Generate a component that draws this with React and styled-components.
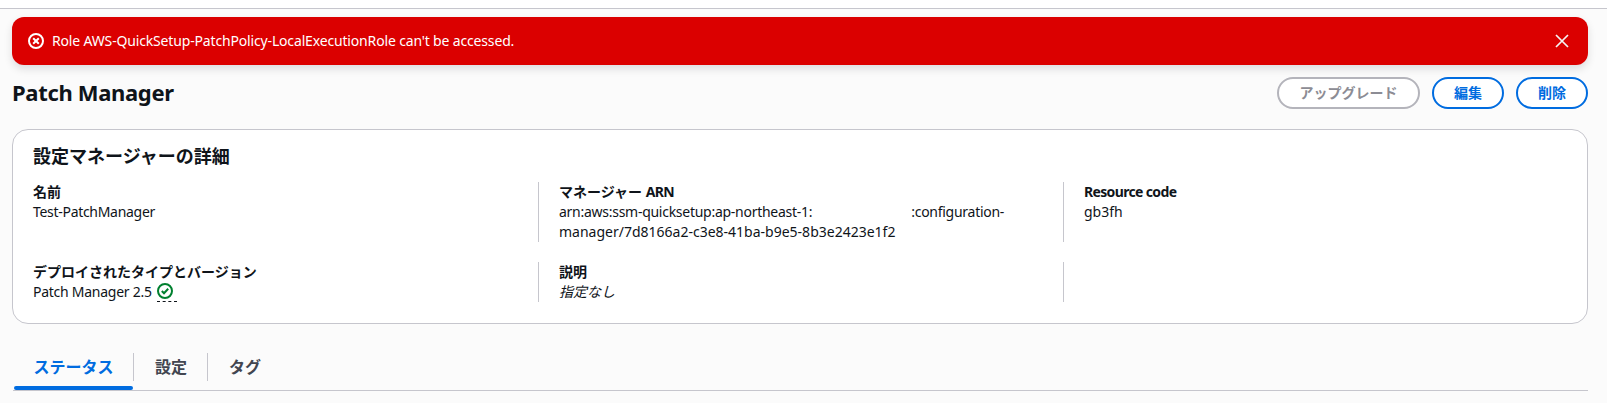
import React from "react";
import styled, { createGlobalStyle } from "styled-components";

const Global = createGlobalStyle`
  html, body { margin: 0; padding: 0; background: #fbfbfb; }
  body { font-family: "Noto Sans", "Noto Sans CJK JP", sans-serif; font-size: 14px; line-height: 20px; color: #0f141a; }
`;
const Page = styled.div`
  width: 1607px; height: 403px; overflow: hidden; display: flex; flex-direction: column;
`;
const TopBar = styled.div`
  height: 8px; background: #fff; border-bottom: 1px solid #c6c6cd; flex: none;
`;
const Content = styled.div`
  display: flex; flex-direction: column; padding: 8px 19px 0 12px;
`;
const Flash = styled.div`
  height: 48px; border-radius: 12px; background: #db0000; color: #fff; display: flex; align-items: center;
  padding: 0 12px 0 16px; box-shadow: 0 4px 8px rgba(0,7,22,.12);
`;
const FlashText = styled.span`
  margin-left: 8px; flex: 1; letter-spacing: -0.16px;
`;
const CloseButton = styled.button`
  border: 0; background: none; padding: 0; width: 16px; height: 16px; margin-right: 6px; display: flex; color: #f4f4f4;
`;
const HeaderRow = styled.div`
  display: flex; align-items: center; justify-content: space-between; margin-top: 12px; height: 32px;
`;
const Title = styled.h1`
  margin: -2px 0 0; font-size: 22px; line-height: 28px; font-weight: 700; color: #0f141a; letter-spacing: -0.33px;
`;
const Actions = styled.div`display: flex; gap: 12px;`;
const Btn = styled.button`
  box-sizing: border-box; height: 32px; width: ${p => p.$w}px; border-radius: 20px; background: #fff;
  border: 2px solid ${p => (p.disabled ? "#b4b4bb" : "#006ce0")};
  color: ${p => (p.disabled ? "#8c8c94" : "#006ce0")};
  font: 700 14px/20px "Noto Sans", "Noto Sans CJK JP", sans-serif; padding: 0;
`;
const Card = styled.section`
  box-sizing: border-box; margin-top: 20px; height: 195px; background: #fff; border: 1px solid #c6c6cd; border-radius: 16px;
  padding: 13px 20px 0;
`;
const CardTitle = styled.h2`
  margin: 0 0 13px; font-size: 18px; line-height: 26px; font-weight: 700;
`;
const Grid = styled.div`
  display: grid; grid-template-columns: 505px 525px 1fr; row-gap: 20px;
`;
const Cell = styled.div`
  min-height: 40px; padding-left: ${p => (p.$first ? 0 : 20)}px;
  border-left: ${p => (p.$first ? "none" : "1px solid #c6c6cd")};
`;
const Label = styled.div`font-weight: 700;`;
const Latin = styled.span`letter-spacing: ${p => p.$ls}px;`;
const Value = styled.div`
  font-style: ${p => (p.$italic ? "italic" : "normal")};
  display: flex; align-items: center; flex-wrap: wrap;
`;
const ArnValue = styled.div`width: 460px;`;
const Redacted = styled.span`display: inline-block; width: 99px;`;
const StatusIcon = styled.span`
  display: inline-flex; width: 20px; box-sizing: border-box; margin-left: 5px; padding-bottom: 2px; border-bottom: 1px dashed #0f141a; color: #00802f;
`;
const Tabs = styled.nav`
  display: flex; margin-top: 21px; border-bottom: 1px solid #c6c6cd; height: 46px; box-sizing: border-box; margin-left: 1px;
`;
const Tab = styled.div`
  position: relative; width: ${p => p.$w}px; display: flex; align-items: center; justify-content: center; box-sizing: border-box;
  font-size: 16px; font-weight: 700; color: ${p => (p.$active ? "#006ce0" : "#424650")};
  height: 40px; margin-top: 2px;
  &::after {
    content: ""; display: ${p => (p.$divider ? "block" : "none")}; position: absolute; right: 0; top: 6px; bottom: 6px; width: 1px; background: #c6c6cd;
  }
  &::before {
    content: ""; display: ${p => (p.$active ? "block" : "none")}; position: absolute; left: 1px; right: 1px; bottom: -3px; height: 4px; border-radius: 2px; background: #006ce0;
  }
`;

const ErrorIcon = () => (
  <svg width="16" height="16" viewBox="0 0 16 16" fill="none" stroke="currentColor" strokeWidth="2">
    <circle cx="8" cy="8" r="7" />
    <path d="M10.8 5.2 5.2 10.8M5.2 5.2l5.6 5.6" />
  </svg>
);
const CloseIcon = () => (
  <svg width="16" height="16" viewBox="0 0 16 16" fill="none" stroke="currentColor" strokeWidth="1.7">
    <path d="M2 2l12 12M14 2 2 14" />
  </svg>
);
const CheckIcon = () => (
  <svg width="16" height="16" viewBox="0 0 16 16" fill="none" stroke="currentColor" strokeWidth="2">
    <circle cx="8" cy="8" r="7" />
    <path d="M4.8 8l2.2 2.2 4.2-4.4" />
  </svg>
);

export default function App() {
  return (
    <Page>
      <Global />
      <TopBar />
      <Content>
        <Flash>
          <ErrorIcon />
          <FlashText>Role AWS-QuickSetup-PatchPolicy-LocalExecutionRole can't be accessed.</FlashText>
          <CloseButton aria-label="close"><CloseIcon /></CloseButton>
        </Flash>
        <HeaderRow>
          <Title>Patch Manager</Title>
          <Actions>
            <Btn disabled $w={143}>アップグレード</Btn>
            <Btn $w={72}>編集</Btn>
            <Btn $w={72}>削除</Btn>
          </Actions>
        </HeaderRow>
        <Card>
          <CardTitle>設定マネージャーの詳細</CardTitle>
          <Grid>
            <Cell $first><Label>名前</Label><Value><Latin $ls={-0.3}>Test-PatchManager</Latin></Value></Cell>
            <Cell>
              <Label>マネージャー <Latin $ls={-0.6}>ARN</Latin></Label>
              <ArnValue><Latin $ls={-0.27}>arn:aws:ssm-quicksetup:ap-northeast-1:<Redacted />:configuration-</Latin>manager/7d8166a2-c3e8-41ba-b9e5-8b3e2423e1f2</ArnValue>
            </Cell>
            <Cell><Label><Latin $ls={-0.65}>Resource code</Latin></Label><Value>gb3fh</Value></Cell>
            <Cell $first>
              <Label>デプロイされたタイプとバージョン</Label>
              <Value><Latin $ls={-0.26}>Patch Manager 2.5</Latin><StatusIcon><CheckIcon /></StatusIcon></Value>
            </Cell>
            <Cell><Label>説明</Label><Value $italic>指定なし</Value></Cell>
            <Cell />
          </Grid>
        </Card>
        <Tabs>
          <Tab $active $divider $w={121}>ステータス</Tab>
          <Tab $divider $w={74}>設定</Tab>
          <Tab $w={74}>タグ</Tab>
        </Tabs>
      </Content>
    </Page>
  );
}
